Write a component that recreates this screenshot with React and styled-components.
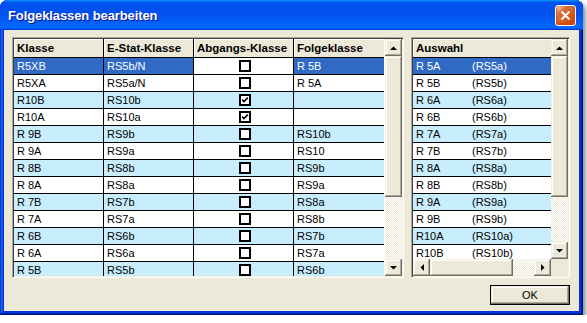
import React from "react";
import styled, { createGlobalStyle } from "styled-components";

const Global = createGlobalStyle`
  html, body { margin: 0; padding: 0; background: #fff; }
  body { font-family: "Liberation Sans", Arial, sans-serif; }
  * { box-sizing: border-box; }
`;

const Window = styled.div`
  width: 583px;
  height: 315px;
  display: flex;
  flex-direction: column;
  padding: 0 4px 4px 4px;
  background: #0831d9;
  border-radius: 8px 8px 0 0;
  box-shadow: inset -1px -1px #00138c, inset 1px 1px #0831d9,
    inset -2px -2px #001ea0, inset 2px 2px #166aee, inset -3px -3px #003bda,
    inset 3px 3px #0855dd, 3px 3px 5px rgba(0, 0, 0, 0.45);
`;

const TitleBar = styled.div`
  margin: 0 -4px;
  height: 30px;
  flex: none;
  display: flex;
  align-items: center;
  justify-content: space-between;
  padding: 0 7px 0 8px;
  border-radius: 8px 8px 0 0;
  background: linear-gradient(
    180deg,
    #0997ff,
    #0053ee 8%,
    #0050ee 40%,
    #06f 88%,
    #06f 93%,
    #005bff 95%,
    #003dd7 96%,
    #003dd7
  );
`;

const Title = styled.span`
  color: #fff;
  font-family: "Liberation Sans", Arial, sans-serif;
  font-weight: bold;
  font-size: 13px;
  letter-spacing: -0.1px;
  text-shadow: 1px 1px #0f1089;
  padding-top: 1px;
`;

const CloseButton = styled.div`
  width: 21px;
  height: 21px;
  border: 1px solid #fff;
  border-radius: 3px;
  display: flex;
  align-items: center;
  justify-content: center;
  background: radial-gradient(
    circle at 90% 90%,
    #cc4600 0,
    #dc6527 55%,
    #cd7546 70%,
    #ffccb2 90%,
    #fff 100%
  );
  box-shadow: inset 0 -1px 2px 1px #da4600;
`;

const Client = styled.div`
  flex: 1;
  background: #ece9d8;
  padding: 7px 9px 6px 8px;
  display: flex;
  flex-direction: column;
  gap: 7px;
`;

const GridRow = styled.div`
  display: flex;
  gap: 7px;
  height: 241px;
`;

const Sunken = styled.div`
  width: ${(p) => p.$w}px;
  height: 100%;
  display: flex;
  border: 1px solid;
  border-color: #aca899 #fff #fff #aca899;
  padding: 1px;
  position: relative;
  background: #fff;
  &::after {
    content: "";
    position: absolute;
    inset: 0;
    pointer-events: none;
    box-shadow: inset 1px 1px #404040, inset -1px -1px #f1efe2;
  }
`;

const TableArea = styled.div`
  flex: 1;
  min-width: 0;
  display: flex;
  flex-direction: column;
  overflow: hidden;
  background: #fff;
`;

const Rows = styled.div`
  flex: 1;
  overflow: hidden;
`;

const Line = styled.div`
  display: grid;
  grid-template-columns: ${(p) => p.$cols};
  height: ${(p) => p.$h || 17}px;
  border-bottom: 1px solid #000;
  flex: none;
`;

const HeadCell = styled.div`
  background: #ece9d8;
  border-right: ${(p) => (p.$last ? "none" : "1px solid #000")};
  box-shadow: inset 1px 1px #fff;
  font-weight: bold;
  font-size: 11.5px;
  color: #000;
  padding: 0 0 0 3px;
  display: flex;
  align-items: center;
  white-space: nowrap;
  overflow: hidden;
`;

const Cell = styled.div`
  background: ${(p) => p.$bg};
  color: ${(p) => (p.$sel ? "#fff" : "#000")};
  border-right: ${(p) => (p.$last ? "none" : "1px solid #000")};
  font-size: 11px;
  padding: 0 0 0 3px;
  display: flex;
  align-items: center;
  justify-content: ${(p) => (p.$center ? "center" : "flex-start")};
  white-space: nowrap;
  overflow: hidden;
`;

const Code = styled.span`
  display: inline-block;
  width: 56px;
`;

const VScroll = styled.div`
  width: 17px;
  flex: none;
  display: flex;
  flex-direction: column;
  margin-left: ${(p) => p.$gap || 0}px;
`;

const HScroll = styled.div`
  height: 17px;
  flex: none;
  display: flex;
`;

const bevel = `
  background: #ece9d8;
  box-shadow: inset -1px -1px #716f64, inset 1px 1px #f1efe2,
    inset -2px -2px #aca899, inset 2px 2px #fff;
`;

const ScrollBtn = styled.div`
  width: 17px;
  height: 17px;
  flex: none;
  ${bevel}
  display: flex;
  align-items: center;
  justify-content: center;
`;

const Thumb = styled.div`
  flex: none;
  ${bevel}
  ${(p) => (p.$horizontal ? `width: ${p.$size}px;` : `height: ${p.$size}px;`)}
`;

const Track = styled.div`
  flex: 1;
  background: repeating-conic-gradient(#ece9d8 0% 25%, #fff 0% 50%) 0 0 / 2px
    2px;
`;

const Corner = styled.div`
  height: 17px;
  flex: none;
  background: #ece9d8;
`;

const Footer = styled.div`
  display: flex;
  justify-content: flex-end;
  padding-right: 0;
`;

const OkButton = styled.button`
  width: 80px;
  height: 20px;
  margin-right: 0;
  border: 1px solid #000;
  ${bevel}
  font-family: "Liberation Sans", Arial, sans-serif;
  font-size: 11px;
  color: #000;
  padding: 0;
`;

const Arrow = ({ dir }) => {
  const pts = {
    up: "0,4 7,4 3.5,0.5",
    down: "0,0 7,0 3.5,3.5",
    left: "4,0 4,7 0.5,3.5",
    right: "0,0 0,7 3.5,3.5",
  }[dir];
  const vertical = dir === "up" || dir === "down";
  return (
    <svg width={vertical ? 7 : 4} height={vertical ? 4 : 7} viewBox={vertical ? "0 0 7 4" : "0 0 4 7"}>
      <polygon points={pts} fill="#000" />
    </svg>
  );
};

const Check = ({ checked }) => (
  <svg width="12" height="12" viewBox="0 0 12 12">
    <rect x="1" y="1" width="10" height="10" fill="#fff" stroke="#000" strokeWidth="2" />
    {checked && (
      <path d="M3.2 5.6 L5 7.6 L8.8 3.6" fill="none" stroke="#000" strokeWidth="1.6" />
    )}
  </svg>
);

const leftData = [
  ["R5XB", "RS5b/N", false, "R 5B"],
  ["R5XA", "RS5a/N", false, "R 5A"],
  ["R10B", "RS10b", true, ""],
  ["R10A", "RS10a", true, ""],
  ["R 9B", "RS9b", false, "RS10b"],
  ["R 9A", "RS9a", false, "RS10"],
  ["R 8B", "RS8b", false, "RS9b"],
  ["R 8A", "RS8a", false, "RS9a"],
  ["R 7B", "RS7b", false, "RS8a"],
  ["R 7A", "RS7a", false, "RS8b"],
  ["R 6B", "RS6b", false, "RS7b"],
  ["R 6A", "RS6a", false, "RS7a"],
  ["R 5B", "RS5b", false, "RS6b"],
];

const rightData = [
  ["R 5A", "(RS5a)"],
  ["R 5B", "(RS5b)"],
  ["R 6A", "(RS6a)"],
  ["R 6B", "(RS6b)"],
  ["R 7A", "(RS7a)"],
  ["R 7B", "(RS7b)"],
  ["R 8A", "(RS8a)"],
  ["R 8B", "(RS8b)"],
  ["R 9A", "(RS9a)"],
  ["R 9B", "(RS9b)"],
  ["R10A", "(RS10a)"],
  ["R10B", "(RS10b)"],
];

const rowBg = (i) => (i === 0 ? "#316ac5" : i % 2 === 0 ? "#c8eefe" : "#fff");

const leftCols = "90px 90px 100px 91px";

export default function App() {
  return (
    <>
      <Global />
      <Window>
        <TitleBar>
          <Title>Folgeklassen bearbeiten</Title>
          <CloseButton>
            <svg width="11" height="11" viewBox="0 0 11 11">
              <path d="M1.5 1.5 L9.5 9.5 M9.5 1.5 L1.5 9.5" stroke="#fff" strokeWidth="2" />
            </svg>
          </CloseButton>
        </TitleBar>
        <Client>
          <GridRow>
            <Sunken $w={392}>
              <TableArea>
                <Line $cols={leftCols} $h={19}>
                  <HeadCell>Klasse</HeadCell>
                  <HeadCell>E-Stat-Klasse</HeadCell>
                  <HeadCell>Abgangs-Klasse</HeadCell>
                  <HeadCell>Folgeklasse</HeadCell>
                </Line>
                <Rows>
                  {leftData.map((r, i) => {
                    const sel = i === 0;
                    const bg = rowBg(i);
                    return (
                      <Line key={i} $cols={leftCols}>
                        <Cell $bg={bg} $sel={sel}>{r[0]}</Cell>
                        <Cell $bg={bg} $sel={sel}>{r[1]}</Cell>
                        <Cell $bg={sel ? "#fff" : bg} $center>
                          <Check checked={r[2]} />
                        </Cell>
                        <Cell $bg={bg} $sel={sel}>{r[3]}</Cell>
                      </Line>
                    );
                  })}
                </Rows>
              </TableArea>
              <VScroll $gap={1}>
                <ScrollBtn><Arrow dir="up" /></ScrollBtn>
                <Thumb $size={141} />
                <Track />
                <ScrollBtn><Arrow dir="down" /></ScrollBtn>
              </VScroll>
            </Sunken>
            <Sunken $w={159}>
              <TableArea>
                <Line $cols="1fr" $h={19}>
                  <HeadCell $last>Auswahl</HeadCell>
                </Line>
                <Rows>
                  {rightData.map((r, i) => (
                    <Line key={i} $cols="1fr">
                      <Cell $bg={rowBg(i)} $sel={i === 0} $last>
                        <Code>{r[0]}</Code>
                        {r[1]}
                      </Cell>
                    </Line>
                  ))}
                </Rows>
                <HScroll>
                  <ScrollBtn><Arrow dir="left" /></ScrollBtn>
                  <Thumb $horizontal $size={83} />
                  <Track />
                  <ScrollBtn><Arrow dir="right" /></ScrollBtn>
                </HScroll>
              </TableArea>
              <VScroll>
                <ScrollBtn><Arrow dir="up" /></ScrollBtn>
                <Thumb $size={141} />
                <Track />
                <ScrollBtn><Arrow dir="down" /></ScrollBtn>
                <Corner />
              </VScroll>
            </Sunken>
          </GridRow>
          <Footer>
            <OkButton>OK</OkButton>
          </Footer>
        </Client>
      </Window>
    </>
  );
}
